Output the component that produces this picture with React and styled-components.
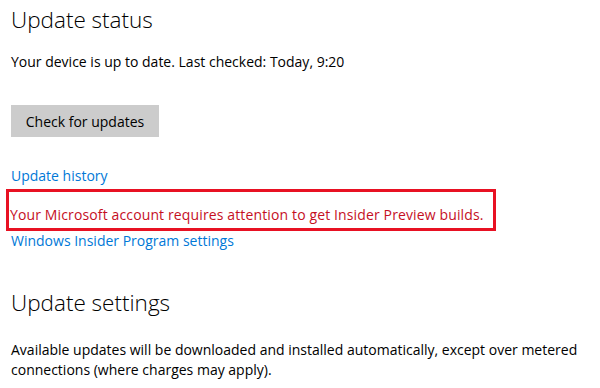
import React from 'react'
import styled, { createGlobalStyle } from 'styled-components'

const GlobalStyle = createGlobalStyle`
  html, body {
    margin: 0;
    padding: 0;
    background: #ffffff;
  }
  body {
    font-family: "Open Sans", "Noto Sans", "Liberation Sans", sans-serif;
    color: #000000;
    -webkit-font-smoothing: antialiased;
  }
`

const Page = styled.div`
  width: 600px;
  height: 388px;
  overflow: hidden;
  padding: 0 0 0 11px;
  box-sizing: border-box;
`

const Heading = styled.h2`
  margin: ${({ $top }) => $top}px 0 0;
  font-size: 22.5px;
  font-weight: 300;
  line-height: 32px;
`

const Text = styled.p`
  margin: ${({ $top }) => $top}px 0 0;
  font-size: 14px;
  line-height: 20px;
  max-width: 585px;
`

const Button = styled.button`
  display: block;
  margin: 33px 0 0;
  width: 148px;
  height: 32px;
  padding: 0;
  border: none;
  background: #cccccc;
  font-family: inherit;
  font-size: 14px;
  color: #000000;
`

const Link = styled.a`
  display: block;
  margin-top: ${({ $top }) => $top}px;
  font-size: 14px;
  line-height: 20px;
  color: #0078d7;
  text-decoration: none;
`

const Alert = styled.div`
  margin: 3px 0 0 -5px;
  width: 490px;
  height: 42px;
  box-sizing: border-box;
  border: 3px solid #e81123;
  display: flex;
  align-items: flex-end;
  padding: 0 0 3px 1px;
  font-size: 14px;
  line-height: 20px;
  letter-spacing: 0.13px;
  color: #c50f1f;
`

export default function App() {
  return (
    <Page>
      <GlobalStyle />
      <Heading $top={4}>Update status</Heading>
      <Text $top={16}>Your device is up to date. Last checked: Today, 9:20</Text>
      <Button>Check for updates</Button>
      <Link href="#" $top={29}>Update history</Link>
      <Alert>Your Microsoft account requires attention to get Insider Preview builds.</Alert>
      <Link href="#" $top={0}>Windows Insider Program settings</Link>
      <Heading $top={36}>Update settings</Heading>
      <Text $top={21}>
        Available updates will be downloaded and installed automatically, except over metered connections (where charges may apply).
      </Text>
    </Page>
  )
}
